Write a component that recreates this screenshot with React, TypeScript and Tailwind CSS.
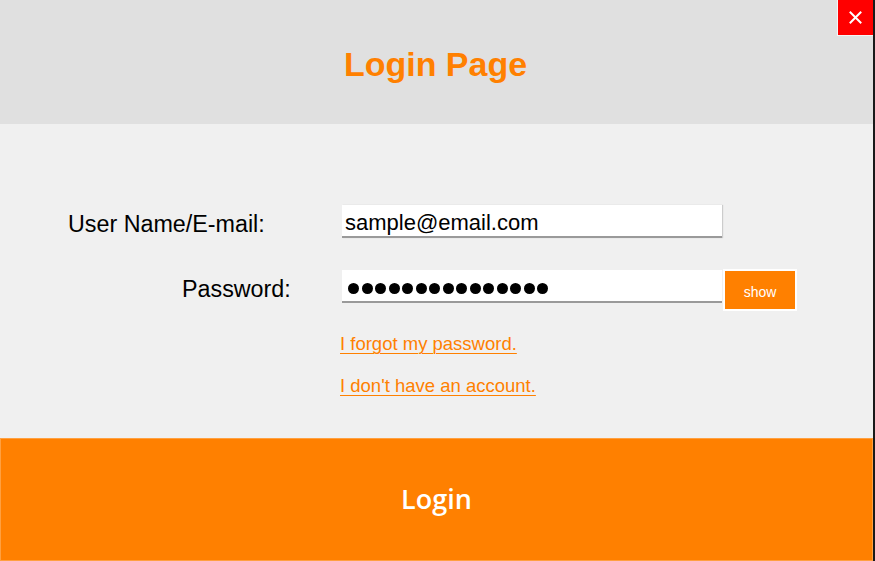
import React from "react";

export default function App() {
  const dots = Array.from({ length: 15 });
  return (
    <div className="w-[875px] h-[561px] bg-[#1a1a1a] overflow-hidden" style={{ fontFamily: '"Liberation Sans", Arial, sans-serif' }}>
      <div className="relative w-[873px] h-[561px] flex flex-col bg-[#f0f0f0]">
        {/* Header */}
        <div className="h-[124px] bg-[#e0e0e0] flex items-center justify-center">
          <h1 className="text-[34px] font-bold text-[#ff8000] leading-none mt-[3px] pr-[2px]">Login Page</h1>
        </div>
        {/* Close button */}
        <button className="absolute top-0 right-0 w-[36px] h-[36px] bg-[#ff0000] border border-[#f5f5f5] border-t-0 border-r-0 flex items-center justify-center">
          <svg width="13" height="13" viewBox="0 0 13 13">
            <path d="M1.5 1.5 L11.5 11.5 M11.5 1.5 L1.5 11.5" stroke="white" strokeWidth="2" strokeLinecap="square" />
          </svg>
        </button>

        {/* Body */}
        <div className="flex-1 flex flex-col pt-[81px]">
          <div className="flex h-[33px] items-center">
            <div className="w-[342px] pl-[68px] pt-[6px] text-[23.3px] text-black">User Name/E-mail:</div>
            <div className="w-[380px] h-[33px] bg-white border-b-2 border-[#9a9a9a] shadow-[1px_0_1px_rgba(0,0,0,0.15)] flex items-center pl-[3px] pt-[3px] text-[22px] text-black">
              sample@email.com
            </div>
          </div>
          <div className="flex h-[33px] items-start mt-[32px]">
            <div className="w-[342px] pl-[182px] h-[33px] flex items-center pt-[5px] text-[23.3px] text-black">Password:</div>
            <div className="w-[380px] h-[33px] bg-white border-b-2 border-[#9a9a9a] flex items-center gap-[2.5px] pl-[6px] pt-[5px]">
              {dots.map((_, i) => (
                <span key={i} className="w-[11px] h-[11px] rounded-full bg-black inline-block" />
              ))}
            </div>
            <button className="ml-[1px] -mt-[1px] w-[74px] h-[42px] bg-[#ff8000] border-2 border-white text-white text-[14px] pt-[4px] flex items-center justify-center">
              show
            </button>
          </div>
          <div className="pl-[340px] mt-[30px] flex flex-col items-start">
            <a className="text-[18.5px] leading-[22px] text-[#ff8000] underline underline-offset-[3px] decoration-1 decoration-[#ff8000]">I forgot my password.</a>
            <a className="mt-[20px] text-[18.5px] leading-[22px] text-[#ff8000] underline underline-offset-[3px] decoration-1 decoration-[#ff8000]">I don't have an account.</a>
          </div>
        </div>

        {/* Login button */}
        <button className="h-[123px] w-full bg-[#ff8000] border border-[#ffa040] flex items-center justify-center">
          <span className="text-white text-[27px] font-semibold" style={{ fontFamily: '"Open Sans", "Noto Sans", sans-serif' }}>Login</span>
        </button>
      </div>
    </div>
  );
}
